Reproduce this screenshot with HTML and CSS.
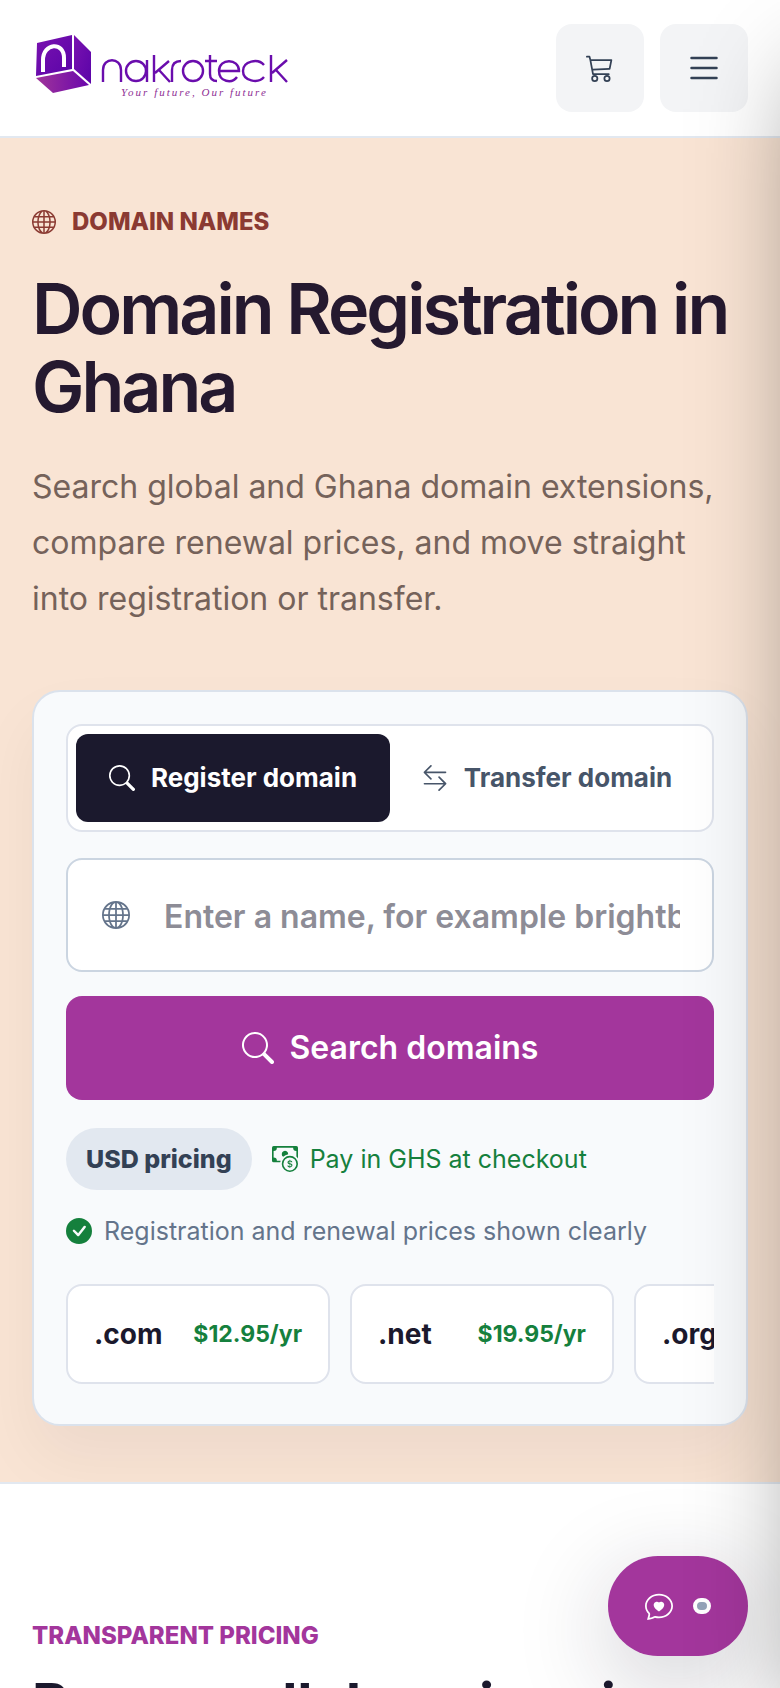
FILE: index.html
```html
<!DOCTYPE html>
<html lang="en">
<head>
<meta charset="utf-8">
<meta name="viewport" content="width=device-width, initial-scale=1">
<title>Domain Registration in Ghana | Nakroteck</title>
<link rel="stylesheet" href="styles.css">
</head>
<body>

<!-- icon sprite -->
<svg class="sprite" aria-hidden="true">
	<symbol id="i-globe" viewBox="0 0 16 16">
		<path d="M0 8a8 8 0 1 1 16 0A8 8 0 0 1 0 8m7.5-6.923c-.67.204-1.335.82-1.887 1.855A8 8 0 0 0 5.145 4H7.5zM4.09 4a9.3 9.3 0 0 1 .64-1.539 7 7 0 0 1 .597-.933A7.03 7.03 0 0 0 2.255 4zm-.582 3.5c.03-.877.138-1.718.312-2.5H1.674a7 7 0 0 0-.656 2.5zM4.847 5a12.5 12.5 0 0 0-.338 2.5H7.5V5zM8.5 5v2.5h2.99a12.5 12.5 0 0 0-.337-2.5zM4.51 8.5a12.5 12.5 0 0 0 .337 2.5H7.5V8.5zm3.99 0V11h2.653c.187-.765.306-1.608.338-2.5zM5.145 12q.208.58.468 1.068c.552 1.035 1.218 1.65 1.887 1.855V12zm.182 2.472a7 7 0 0 1-.597-.933A9.3 9.3 0 0 1 4.09 12H2.255a7 7 0 0 0 3.072 2.472M3.82 11a13.7 13.7 0 0 1-.312-2.5h-2.49c.062.89.291 1.733.656 2.5zm6.853 3.472A7 7 0 0 0 13.745 12H11.91a9.3 9.3 0 0 1-.64 1.539 7 7 0 0 1-.597.933M8.5 12v2.923c.67-.204 1.335-.82 1.887-1.855q.26-.487.468-1.068zm3.68-1h2.146c.365-.767.594-1.61.656-2.5h-2.49a13.7 13.7 0 0 1-.312 2.5m2.802-3.5a7 7 0 0 0-.656-2.5H12.18c.174.782.282 1.623.312 2.5zM11.27 2.461c.247.464.462.98.64 1.539h1.835a7 7 0 0 0-3.072-2.472c.218.284.418.598.597.933M10.855 4a8 8 0 0 0-.468-1.068C9.835 1.897 9.17 1.282 8.5 1.077V4z"/>
	</symbol>
	<symbol id="i-search" viewBox="0 0 16 16">
		<path d="M11.742 10.344a6.5 6.5 0 1 0-1.397 1.398h-.001q.044.06.098.115l3.85 3.85a1 1 0 0 0 1.415-1.414l-3.85-3.85a1 1 0 0 0-.115-.1zM12 6.5a5.5 5.5 0 1 1-11 0 5.5 5.5 0 0 1 11 0"/>
	</symbol>
	<symbol id="i-swap" viewBox="0 0 16 16">
		<path d="M1 11.5a.5.5 0 0 0 .5.5h11.793l-3.147 3.146a.5.5 0 0 0 .708.708l4-4a.5.5 0 0 0 0-.708l-4-4a.5.5 0 0 0-.708.708L13.293 11H1.5a.5.5 0 0 0-.5.5m14-7a.5.5 0 0 1-.5.5H2.707l3.147 3.146a.5.5 0 1 1-.708.708l-4-4a.5.5 0 0 1 0-.708l4-4a.5.5 0 1 1 .708.708L2.707 4H14.5a.5.5 0 0 1 .5.5"/>
	</symbol>
	<symbol id="i-cart" viewBox="0 0 16 16">
		<path d="M0 1.5A.5.5 0 0 1 .5 1H2a.5.5 0 0 1 .485.379L2.89 3H14.5a.5.5 0 0 1 .49.598l-1 5a.5.5 0 0 1-.465.401l-9.397.472L4.415 11H13a.5.5 0 0 1 0 1H4a.5.5 0 0 1-.491-.408L2.01 3.607 1.61 2H.5a.5.5 0 0 1-.5-.5M3.102 4l.84 4.479 9.144-.459L13.89 4zM5 12a2 2 0 1 0 0 4 2 2 0 0 0 0-4m7 0a2 2 0 1 0 0 4 2 2 0 0 0 0-4m-7 1a1 1 0 1 1 0 2 1 1 0 0 1 0-2m7 0a1 1 0 1 1 0 2 1 1 0 0 1 0-2"/>
	</symbol>
	<symbol id="i-list" viewBox="0 0 16 16">
		<path fill-rule="evenodd" d="M2.5 12a.5.5 0 0 1 .5-.5h10a.5.5 0 0 1 0 1H3a.5.5 0 0 1-.5-.5m0-4a.5.5 0 0 1 .5-.5h10a.5.5 0 0 1 0 1H3a.5.5 0 0 1-.5-.5m0-4a.5.5 0 0 1 .5-.5h10a.5.5 0 0 1 0 1H3a.5.5 0 0 1-.5-.5"/>
	</symbol>
	<symbol id="i-cash" viewBox="0 0 16 16">
		<path fill-rule="evenodd" d="M11 15a4 4 0 1 0 0-8 4 4 0 0 0 0 8m5-4a5 5 0 1 1-10 0 5 5 0 0 1 10 0"/>
		<path d="M9.438 11.944c.047.596.518 1.06 1.363 1.116v.44h.375v-.443c.875-.061 1.386-.529 1.386-1.207 0-.618-.39-.936-1.09-1.1l-.296-.07v-1.2c.376.043.614.248.671.532h.658c-.047-.575-.54-1.024-1.329-1.073V8.5h-.375v.45c-.747.073-1.255.522-1.255 1.158 0 .562.378.92 1.007 1.066l.248.061v1.272c-.384-.058-.639-.27-.696-.563h-.668zm1.36-1.354c-.369-.085-.569-.26-.569-.522 0-.294.216-.514.572-.578v1.1zm.432.746c.449.104.655.272.655.569 0 .339-.257.571-.709.614v-1.195z"/>
		<path d="M1 0a1 1 0 0 0-1 1v8a1 1 0 0 0 1 1h4.083q.088-.517.258-1H3a2 2 0 0 0-2-2V3a2 2 0 0 0 2-2h10a2 2 0 0 0 2 2v3.528c.38.34.717.728 1 1.154V1a1 1 0 0 0-1-1z"/>
		<path d="M9.998 5.083 10 5a2 2 0 1 0-3.132 1.65 6 6 0 0 1 3.13-1.567"/>
	</symbol>
	<symbol id="i-check" viewBox="0 0 16 16">
		<path d="M16 8A8 8 0 1 1 0 8a8 8 0 0 1 16 0m-3.97-3.03a.75.75 0 0 0-1.08.022L7.477 9.417 5.384 7.323a.75.75 0 0 0-1.06 1.06L6.97 11.03a.75.75 0 0 0 1.079-.02l3.992-4.99a.75.75 0 0 0-.01-1.05z"/>
	</symbol>
	<symbol id="i-chat" viewBox="0 0 16 16">
		<path fill-rule="evenodd" d="M2.965 12.695a1 1 0 0 0-.287-.801C1.618 10.83 1 9.468 1 8c0-3.192 3.004-6 7-6s7 2.808 7 6-3.004 6-7 6a8 8 0 0 1-2.088-.272 1 1 0 0 0-.711.074c-.387.196-1.24.57-2.634.893a11 11 0 0 0 .398-2m-.8 3.108.02-.004c1.83-.363 2.948-.842 3.468-1.105A9 9 0 0 0 8 15c4.418 0 8-3.134 8-7s-3.582-7-8-7-8 3.134-8 7c0 1.76.743 3.37 1.97 4.6a10.4 10.4 0 0 1-.524 2.318l-.003.011a11 11 0 0 1-.244.637c-.079.186.074.394.273.362a22 22 0 0 0 .693-.125M8 5.993c1.664-1.711 5.825 1.283 0 5.132-5.825-3.85-1.664-6.843 0-5.132"/>
	</symbol>
</svg>

<header class="topbar">
	<a class="brand" href="#" aria-label="Nakroteck">
		<svg class="brand-logo" viewBox="0 0 256 68">
			<defs>
				<linearGradient id="g-cube" x1="0" y1="0" x2="1" y2="1"><stop offset="0" stop-color="#7a12b0"/><stop offset="1" stop-color="#5a04a8"/></linearGradient>
				<linearGradient id="g-base" x1="0" y1="0" x2="1" y2="0"><stop offset="0" stop-color="#a0359a"/><stop offset="1" stop-color="#6a06ac"/></linearGradient>
			</defs>
			<path fill="url(#g-cube)" d="M2 9 37 1v34L1 42z"/>
			<path fill="url(#g-cube)" d="M39 1 56 18v32L39 35z"/>
			<path fill="url(#g-base)" d="M1 44 38 37 54 51 18 59z"/>
			<path class="logo-arch" d="M8 38V26c0-17 21-19 21-2v9"/>
			<g class="logo-word">
				<path d="M68 48V36c0-13 18-13 18 0v12"/>
				<circle cx="101" cy="37" r="10"/>
				<path d="M112 26v22M119 21v27M134 27 120 39M124 36l11 12M137 48V36c0-6 3-9 9-9"/>
				<circle cx="158" cy="37" r="10"/>
				<path d="M175 21v19c0 5 2 7 7 7M170 27h12M184 37h20c0-13-20-13-20 0 0 11 13 13 18 6"/>
				<path d="M229 31c-6-7-21-4-21 6s15 13 21 6M236 21v27M252 26 237 39M241 36l11 12"/>
			</g>
		</svg>
		<span class="brand-tag">Your future, Our future</span>
	</a>
	<nav class="actions">
		<a class="icon-btn" href="#" aria-label="Cart"><svg class="ico ico-lg"><use href="#i-cart"/></svg></a>
		<button class="icon-btn" type="button" aria-label="Open menu"><svg class="ico ico-menu"><use href="#i-list"/></svg></button>
	</nav>
</header>

<main>
	<section class="hero">
		<p class="eyebrow"><svg class="ico"><use href="#i-globe"/></svg>DOMAIN NAMES</p>
		<h1>Domain Registration in Ghana</h1>
		<p class="lead">Search global and Ghana domain extensions, compare renewal prices, and move straight into registration or transfer.</p>

		<form class="card">
			<div class="tabs">
				<button class="tab active" type="button"><svg class="ico ico-md"><use href="#i-search"/></svg>Register domain</button>
				<button class="tab" type="button"><svg class="ico ico-md"><use href="#i-swap"/></svg>Transfer domain</button>
			</div>
			<label class="field">
				<svg class="ico ico-lg"><use href="#i-globe"/></svg>
				<input type="text" aria-label="Domain name" placeholder="Enter a name, for example brightbrand">
			</label>
			<button class="submit" type="submit"><svg class="ico ico-xl"><use href="#i-search"/></svg>Search domains</button>
			<div class="notes">
				<span class="pill">USD pricing</span>
				<span class="note green"><svg class="ico ico-md"><use href="#i-cash"/></svg>Pay in GHS at checkout</span>
				<span class="note"><svg class="ico ico-md ico-ok"><use href="#i-check"/></svg>Registration and renewal prices shown clearly</span>
			</div>
			<div class="tlds">
				<a class="tld" href="#"><strong>.com</strong><span>$12.95/yr</span></a>
				<a class="tld" href="#"><strong>.net</strong><span>$19.95/yr</span></a>
				<a class="tld" href="#"><strong>.org</strong></a>
			</div>
		</form>
	</section>

	<section class="pricing">
		<p class="eyebrow purple">TRANSPARENT PRICING</p>
		<h2>Browse all domain prices</h2>
	</section>
</main>

<button class="chat" type="button" aria-label="Live chat"><svg class="ico ico-lg"><use href="#i-chat"/></svg><span class="status"></span></button>
<aside class="drawer" aria-hidden="true"></aside>

</body>
</html>
```

FILE: styles.css
```css
*{box-sizing:border-box;margin:0;padding:0;}
html{height:100%;overflow:hidden;}
body{height:100%;overflow:hidden;background:#fff;color:#1b192d;font-family:Inter,"Liberation Sans",sans-serif;font-size:24px;line-height:38px;}
a{color:inherit;text-decoration:none;}
button,input{font:inherit;color:inherit;border:0;background:none;}
button{cursor:pointer;}
.sprite{display:none;}

/* icons */
.ico{display:block;flex:none;width:24px;height:24px;fill:currentColor;}
.ico-md{width:26px;height:26px;}
.ico-lg{width:28px;height:28px;}
.ico-xl{width:32px;height:32px;}
.ico-menu{width:40px;height:40px;}
.ico-ok{color:#15803d;}

/* header */
.topbar{display:flex;align-items:center;justify-content:space-between;padding:24px 32px;border-bottom:2px solid #e2e8f0;background:#fff;}
.brand{display:grid;padding-left:3px;}
.brand-logo{grid-area:1/1;width:256px;height:68px;}
.brand-tag{grid-area:1/1;align-self:end;padding:0 0 3px 86px;font:italic 11px/14px "Liberation Serif",serif;letter-spacing:2px;color:#8f2f95;}
.logo-arch{fill:none;stroke:#fff;stroke-width:4;}
.logo-word{fill:none;stroke:#6a0dad;stroke-width:2.4;}
.actions{display:flex;gap:16px;}
.icon-btn{display:flex;align-items:center;justify-content:center;width:88px;height:88px;border-radius:16px;background:#f3f4f6;color:#334155;}

/* hero */
.hero{overflow:hidden;padding:68px 32px 56px;border-bottom:2px solid #e2e8f0;background:#f9e4d4;}
.eyebrow{display:flex;align-items:center;gap:16px;font-weight:800;line-height:32px;color:#8b3a32;}
.purple{color:#a3369c;}
h1{margin-top:32px;font-size:70px;line-height:78px;font-weight:600;letter-spacing:-3px;color:#25192f;}
.lead{margin-top:33px;font-size:32px;line-height:56px;color:#75625a;}

/* search card */
.card{margin-top:63px;padding:32px 32px 40px;border:2px solid #dbe2ec;border-radius:28px;background:#f8fafc;box-shadow:0 32px 64px rgba(27,25,45,.05);}
.tabs{display:grid;grid-template-columns:1fr 1fr;padding:8px;border:2px solid #dfe3ec;border-radius:16px;background:#fff;}
.tab{display:flex;align-items:center;justify-content:center;gap:16px;height:88px;border-radius:12px;font-size:26px;font-weight:700;color:#475569;}
.tab.active{background:#1b192d;color:#fff;}
.field{display:flex;align-items:center;gap:34px;margin-top:26px;padding:0 32px 0 34px;border:2px solid #cbd5e1;border-radius:16px;background:#fff;color:#64748b;}
.field input{flex:1;min-width:0;height:110px;padding-top:2px;font-size:32px;font-weight:600;outline:0;color:#1b192d;}
.field input::placeholder{color:#8d8c96;opacity:1;}
.submit{display:flex;align-items:center;justify-content:center;gap:16px;width:100%;height:104px;margin-top:24px;border-radius:16px;background:#a3369c;color:#fff;font-size:32px;font-weight:600;}
.notes{display:flex;flex-wrap:wrap;align-items:center;gap:22px 20px;margin-top:28px;font-size:25px;}
.pill{padding:12px 20px;border-radius:32px;background:#e2e8f0;color:#334155;font-weight:800;}
.note{display:flex;align-items:center;gap:12px;color:#64748b;}
.green{color:#15803d;}
.tlds{display:flex;gap:20px;margin-top:34px;overflow:hidden;}
.tld{display:flex;flex:none;align-items:center;justify-content:space-between;width:264px;height:100px;padding:0 26px;border:2px solid #dfe3ec;border-radius:16px;background:#fff;}
.tld strong{font-size:28px;}
.tld span{font-size:23px;font-weight:700;color:#15803d;}

/* pricing */
.pricing{padding:136px 32px;}
h2{margin-top:20px;font-size:56px;line-height:64px;font-weight:700;}

/* floating chat button */
.chat{position:fixed;right:32px;bottom:32px;display:flex;align-items:center;justify-content:center;gap:20px;width:140px;height:100px;border-radius:50px;background:#a3369c;color:#fff;box-shadow:0 24px 96px rgba(27,25,45,.22);}
.status{width:18px;height:16px;border:4px solid #fff;border-radius:8px;background:#94a3b8;}

/* closed side menu, only its shadow shows */
.drawer{position:fixed;top:0;bottom:0;left:100%;width:640px;box-shadow:0 50px 100px -24px rgba(0,0,0,.42);}
```
